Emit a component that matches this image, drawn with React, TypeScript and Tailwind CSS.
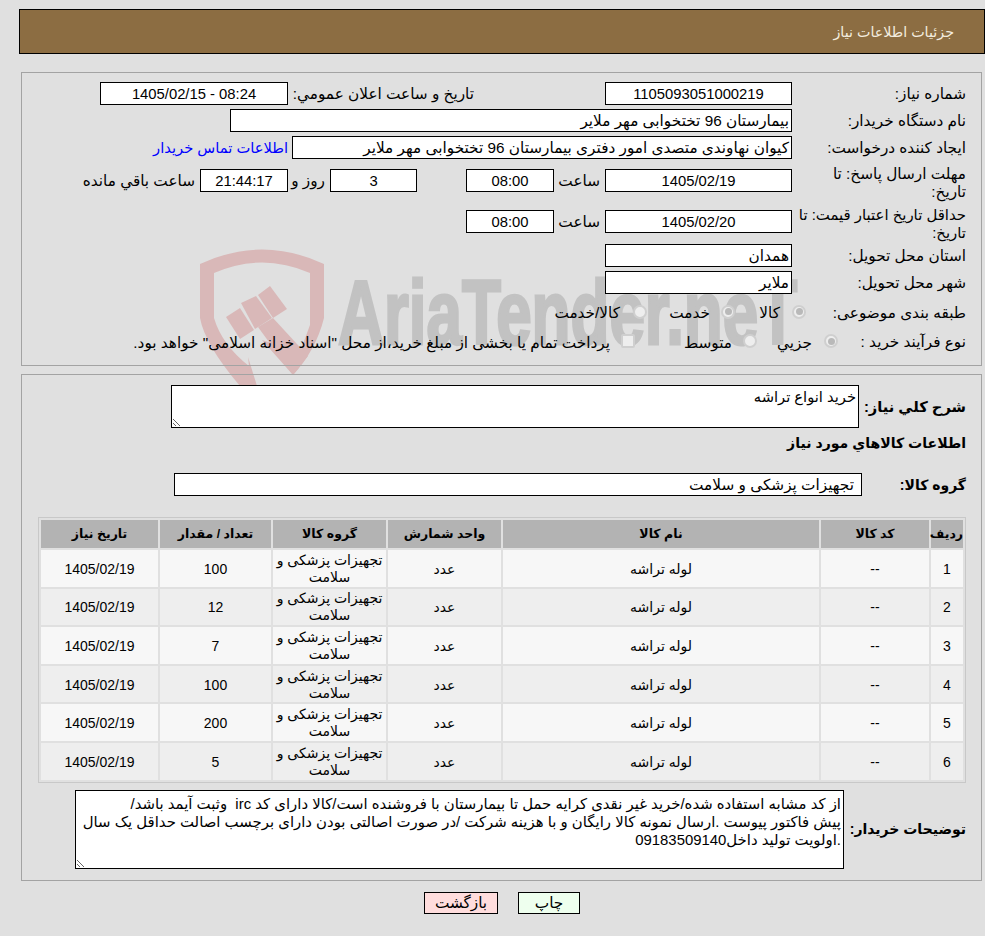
import React from "react";

const box = "h-[23px] shrink-0 border border-black bg-white flex items-center text-black";
const center = "justify-center text-[14.8px]";
const start = "justify-start pr-[2px]";

function Radio({ on }: { on?: boolean }) {
  return (
    <span className="w-[14px] h-[14px] shrink-0 rounded-full bg-[#eeeeee] border-2 border-[#cfcfcf] flex items-center justify-center">
      {on ? <span className="w-[7px] h-[7px] rounded-full bg-[#b9b9b9]" /> : null}
    </span>
  );
}

function Watermark() {
  return (
    <div className="absolute left-0 top-0 w-[985px] h-[400px] overflow-hidden" dir="ltr">
      <svg className="absolute left-[195px] top-[245px]" width="140" height="145" viewBox="195 245 140 145">
        <path
          d="M200 264 Q262 235 324 264 L324 318 Q316 350 293 375 L262 340 L300 352 L310 325 L310 273 Q262 252 214 273 L214 318 Q222 345 249 366 L248 357 L257 386 L240 386 Q205 345 200 318 Z"
          fill="#d9b8b8"
        />
        <path d="M226 317 L240 308 L254 330 L240 339 Z" fill="#d9b8b8" />
        <path d="M241 303 L256 296 L272 318 L255 329 Z" fill="#d9b8b8" />
        <path d="M258 295 L270 286 L287 309 L273 318 Z" fill="#d9b8b8" />
        <path d="M258 327 L273 318 L308 356 L293 375 Z" fill="#d9b8b8" />
      </svg>
      <div className="absolute left-[338px] top-[263px] origin-top-left scale-x-[0.708] text-[#c2c2c2] font-bold text-[90px] leading-[100px] whitespace-nowrap [-webkit-text-stroke:3px_#c2c2c2] [font-family:'Liberation_Sans',sans-serif]">
        AriaTender.neT
      </div>
    </div>
  );
}

const rows = [
  ["1", "100"],
  ["2", "12"],
  ["3", "7"],
  ["4", "100"],
  ["5", "200"],
  ["6", "5"],
];

const notes =
  "از کد مشابه استفاده شده/خرید غیر نقدی کرایه حمل تا بیمارستان با فروشنده است/کالا دارای کد irc  وثبت آیمد باشد/\nپیش فاکتور پیوست .ارسال نمونه کالا رایگان و با هزینه شرکت /در صورت اصالتی بودن دارای برچسب اصالت حداقل یک سال\n.اولویت تولید داخل09183509140";

export default function App() {
  return (
    <div
      dir="rtl"
      className="relative w-[985px] h-[936px] overflow-hidden bg-[#e0e0e0] pt-[9px] text-black text-[15.3px] leading-[18px] [font-family:'Liberation_Sans','DejaVu_Sans',sans-serif]"
    >
      <Watermark />
      <div className="relative">
        <div className="ml-[19px] mr-0 h-[45px] bg-[#8c6d42] border border-black flex items-center pr-[30px] text-[14.3px] text-[#f3ecdf]">
          جزئیات اطلاعات نیاز
        </div>

        <section className="ml-[21px] mr-[3px] mt-[18px] h-[294px] border border-[#a3a3a3] pr-[15px] pt-[9px]">
          <div className="flex items-center h-[23px]">
            <div className="w-[174px] shrink-0">شماره نیاز:</div>
            <div className={`${box} ${center} w-[187px]`}>1105093051000219</div>
            <div className="w-[131px] shrink-0" />
            <div className="w-[186px] shrink-0 whitespace-nowrap">تاریخ و ساعت اعلان عمومي:</div>
            <div dir="ltr" className={`${box} ${center} w-[188px]`}>1405/02/15 - 08:24</div>
          </div>
          <div className="flex items-center h-[23px] mt-[4px]">
            <div className="w-[174px] shrink-0">نام دستگاه خریدار:</div>
            <div className={`${box} ${start} w-[562px]`}>بیمارستان 96 تختخوابی مهر ملایر</div>
          </div>
          <div className="flex items-center h-[23px] mt-[4px]">
            <div className="w-[174px] shrink-0">ایجاد کننده درخواست:</div>
            <div className={`${box} ${start} w-[500px]`}>کیوان نهاوندی متصدی امور دفتری بیمارستان 96 تختخوابی مهر ملایر</div>
            <a className="mr-[4px] text-[14.7px] text-[#0000ff] whitespace-nowrap">اطلاعات تماس خریدار</a>
          </div>
          <div className="flex items-center h-[37px] mt-[3px]">
            <div className="w-[174px] shrink-0 pt-[4px]">مهلت ارسال پاسخ: تا<br />تاریخ:</div>
            <div className={`${box} ${center} w-[187px] h-[22px]`}>1405/02/19</div>
            <div className="w-[51px] shrink-0 pr-[5px]">ساعت</div>
            <div className={`${box} ${center} w-[88px] h-[22px]`}>08:00</div>
            <div className="w-[49px] shrink-0" />
            <div className={`${box} ${center} w-[87px] h-[22px]`}>3</div>
            <div className="w-[42px] shrink-0 pr-[5px]">روز و</div>
            <div className={`${box} ${center} w-[88px] h-[22px] bg-[#ffffee]`}>21:44:17</div>
            <div className="pr-[5px] whitespace-nowrap">ساعت باقي مانده</div>
          </div>
          <div className="flex items-center h-[37px] mt-[4px]">
            <div className="w-[174px] shrink-0 pt-[4px] whitespace-nowrap text-[14.9px]">حداقل تاریخ اعتبار قیمت: تا<br />تاریخ:</div>
            <div className={`${box} ${center} w-[187px]`}>1405/02/20</div>
            <div className="w-[51px] shrink-0 pr-[5px]">ساعت</div>
            <div className={`${box} ${center} w-[88px]`}>08:00</div>
          </div>
          <div className="flex items-center h-[23px] mt-[4px]">
            <div className="w-[174px] shrink-0">استان محل تحویل:</div>
            <div className={`${box} ${start} w-[187px]`}>همدان</div>
          </div>
          <div className="flex items-center h-[23px] mt-[4px]">
            <div className="w-[174px] shrink-0">شهر محل تحویل:</div>
            <div className={`${box} ${start} w-[187px]`}>ملایر</div>
          </div>
          <div className="flex items-center h-[23px] mt-[6px]">
            <div className="w-[160px] shrink-0 pt-[2px]">طبقه بندی موضوعی:</div>
            <div className="w-[71px] shrink-0 flex items-center gap-3"><Radio on /><span className="pt-[3px]">کالا</span></div>
            <div className="w-[88px] shrink-0 flex items-center gap-[11px]"><Radio on /><span className="pt-[3px]">خدمت</span></div>
            <div className="flex items-center gap-[13px]"><Radio /><span className="pt-[3px]">کالا/خدمت</span></div>
          </div>
          <div className="flex items-center h-[24px] mt-[6px]">
            <div className="w-[128px] shrink-0 pt-[2px]">نوع فرآیند خرید :</div>
            <div className="w-[81px] shrink-0 flex items-center gap-3"><Radio on /><span className="pt-[3px]">جزیي</span></div>
            <div className="w-[122px] shrink-0 flex items-center gap-[11px]"><Radio /><span className="pt-[3px]">متوسط</span></div>
            <div className="flex items-center gap-[11px] whitespace-nowrap">
              <span className="w-[14px] h-[14px] shrink-0 rounded-[2px] bg-[#eeeeee] border-2 border-[#cfcfcf]" />
              <span className="pt-[3px]">پرداخت تمام یا بخشی از مبلغ خرید،از محل "اسناد خزانه اسلامی" خواهد بود.</span>
            </div>
          </div>
        </section>

        <section className="ml-[21px] mr-[3px] mt-[8px] h-[507px] border border-[#a3a3a3] pr-[15px] pt-[10px]">
          <div className="flex items-center h-[43px]">
            <div className="w-[107px] shrink-0 font-bold whitespace-nowrap text-[14.7px]">شرح کلي نیاز:</div>
            <textarea
              readOnly
              defaultValue="خرید انواع تراشه"
              className="w-[688px] h-[43px] shrink-0 bg-white border border-black pt-[3px] px-[2px] text-[14.7px] leading-[17px]"
            />
          </div>
          <div className="h-[20px] mt-[5px] font-bold text-[14.1px] flex items-center">اطلاعات کالاهاي مورد نیاز</div>
          <div className="flex items-center h-[23px] mt-[20px]">
            <div className="w-[104px] shrink-0 font-bold text-[14px]">گروه کالا:</div>
            <div className={`${box} justify-start pr-[7px] w-[688px]`}>تجهیزات پزشکی و سلامت</div>
          </div>
          <table className="mt-[21px] w-[928px] table-fixed border-separate border-spacing-[2px] border border-[#c8c8c8] text-[14px] leading-[17px] text-center">
            <colgroup>
              <col className="w-[32px]" />
              <col className="w-[108px]" />
              <col className="w-[316px]" />
              <col className="w-[113px]" />
              <col className="w-[113px]" />
              <col className="w-[111px]" />
              <col className="w-[117px]" />
            </colgroup>
            <thead>
              <tr className="h-[28px] bg-[#b3b3b3] text-[12.5px]">
                <th className="p-0 font-bold">ردیف</th>
                <th className="p-0 font-bold">کد کالا</th>
                <th className="p-0 font-bold">نام کالا</th>
                <th className="p-0 font-bold">واحد شمارش</th>
                <th className="p-0 font-bold">گروه کالا</th>
                <th className="p-0 font-bold">تعداد / مقدار</th>
                <th className="p-0 font-bold">تاریخ نیاز</th>
              </tr>
            </thead>
            <tbody>
              {rows.map(([n, q], i) => (
                <tr key={n} className={i % 2 === 0 ? "h-[36.6px] bg-[#f7f7f7]" : "h-[36.6px] bg-[#eeeeee]"}>
                  <td className="p-0 pt-[2px]">{n}</td>
                  <td className="p-0 pt-[2px]">--</td>
                  <td className="p-0 pt-[2px]">لوله تراشه</td>
                  <td className="p-0 pt-[2px]">عدد</td>
                  <td className="p-0 pt-[1px]">تجهیزات پزشکی و سلامت</td>
                  <td className="p-0 pt-[2px]">{q}</td>
                  <td className="p-0 pt-[2px]">1405/02/19</td>
                </tr>
              ))}
            </tbody>
          </table>
          <div className="flex items-center h-[79px] mt-[7px]">
            <div className="w-[122px] shrink-0 font-bold text-[14px] whitespace-nowrap">توضیحات خریدار:</div>
            <textarea
              readOnly
              defaultValue={notes}
              wrap="off"
              className="w-[769px] h-[79px] shrink-0 bg-white border border-black pt-[4px] pr-[2px] pl-[2px] text-[14.9px] leading-[18px] overflow-hidden"
            />
          </div>
        </section>

        <div className="mt-[11px] flex justify-center gap-[20px] pl-[19px]">
          <button className="w-[62px] h-[22px] border border-black bg-[#eeffee] flex items-center justify-center">چاپ</button>
          <button className="w-[74px] h-[22px] border border-black bg-[#ffdddd] flex items-center justify-center">بازگشت</button>
        </div>
      </div>
    </div>
  );
}
